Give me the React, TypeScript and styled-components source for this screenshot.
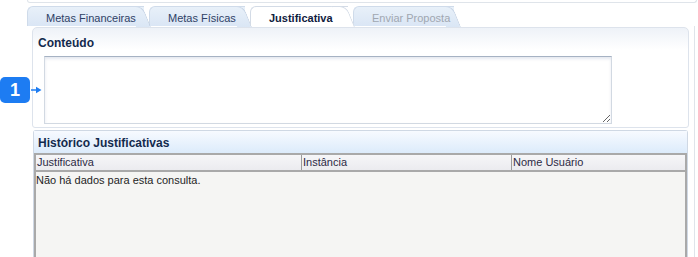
import styled, { createGlobalStyle } from 'styled-components'

const Global = createGlobalStyle`
  html, body { margin: 0; padding: 0; background: #fff; }
  body { font-family: "Liberation Sans", Arial, sans-serif; }
`

const Page = styled.div`
  position: relative;
  width: 698px;
  height: 257px;
  overflow: hidden;
  background: #fff;
`

const Frame = styled.div`
  margin-left: 27px;
  width: 670px;
`

const TopStrip = styled.div`
  height: 2px;
  border: 1px solid #dfe4ea;
  border-top: none;
  border-radius: 0 0 4px 4px;
`

const TabBar = styled.div`
  display: flex;
  height: 20px;
  margin-top: 3px;
`

const Tab = styled.div<{ $active?: boolean; $disabled?: boolean; $z: number; $w: number }>`
  position: relative;
  z-index: ${({ $z }) => $z};
  width: ${({ $w }) => $w}px;
  height: 20px;
  box-sizing: border-box;
  padding: 4px 0 0 18px;
  margin-right: 5px;
  font-size: 11px;
  line-height: 14px;
  font-weight: ${({ $active }) => ($active ? 700 : 400)};
  color: ${({ $active, $disabled }) => ($active ? '#0f2040' : $disabled ? '#a0a7b1' : '#2e4166')};
  background: ${({ $active }) => ($active ? '#fff' : 'linear-gradient(#e8f0f9, #dae6f5)')};
  border-top: 1px solid ${({ $active }) => ($active ? '#d3dbe6' : '#cfdbea')};
  border-left: 1px solid ${({ $active }) => ($active ? '#d3dbe6' : '#cfdbea')};
  border-top-left-radius: 6px;
  white-space: nowrap;

  &::after {
    content: '';
    position: absolute;
    top: -1px;
    right: -7px;
    width: 14px;
    height: 20px;
    background: inherit;
    border-top: 1px solid ${({ $active }) => ($active ? '#d3dbe6' : '#cfdbea')};
    border-right: 1px solid ${({ $active }) => ($active ? '#d3dbe6' : '#c3d1e3')};
    border-top-right-radius: 7px;
    transform: skewX(22deg);
    transform-origin: bottom left;
    z-index: -1;
  }
`

const Body = styled.div`
  margin-right: 2px;
  padding: 1px 5px 0 5px;
  border-right: 1px solid #dfe4ea;
  height: 240px;
  box-sizing: border-box;
  display: flex;
  flex-direction: column;
`

const Panel = styled.div`
  border: 1px solid #dde3ec;
  border-radius: 5px 5px 3px 3px;
  height: 101px;
  box-sizing: border-box;
  background: linear-gradient(#eef2f8, #fff 22px);
`

const PanelTitle = styled.div`
  padding: 8px 0 0 5px;
  height: 28px;
  box-sizing: border-box;
  font-size: 12px;
  line-height: 14px;
  font-weight: 700;
  color: #132a4d;
`

const TextBox = styled.textarea`
  display: block;
  margin: 0 0 0 11px;
  width: 568px;
  height: 68px;
  box-sizing: border-box;
  border: 1px solid #d2d9e2;
  border-top-color: #a6b2c3;
  box-shadow: inset 0 2px 3px rgba(150, 165, 190, 0.25);
  background: #fff;
  resize: both;
  outline: none;
  font-family: inherit;
`

const History = styled.div`
  margin: 2px 1px 0 1px;
  flex: 1;
  display: flex;
  flex-direction: column;
  border: 1px solid #cfd8e4;
  border-bottom: none;
  border-radius: 3px 3px 0 0;
`

const HistoryTitle = styled.div`
  height: 22px;
  padding: 5px 0 0 4px;
  box-sizing: border-box;
  font-size: 12px;
  line-height: 14px;
  font-weight: 700;
  color: #132a4d;
  background: linear-gradient(#f7faff, #dcebfb);
`

const Grid = styled.div`
  flex: 1;
  display: flex;
  flex-direction: column;
  border-left: 2px solid #a9a9a9;
  border-right: 2px solid #a9a9a9;
  background: #f5f5f3;
`

const HeadRow = styled.div`
  display: grid;
  grid-template-columns: 265px 210px 1fr;
  height: 19px;
  box-sizing: border-box;
  border-top: 2px solid #a9a9a9;
  border-bottom: 2px solid #a9a9a9;
  background: linear-gradient(#f6f6f8, #ebebef);
`

const HeadCell = styled.div<{ $first?: boolean }>`
  padding-left: 1px;
  font-size: 11px;
  line-height: 15px;
  color: #2c2a44;
  border-left: ${({ $first }) => ($first ? 'none' : '1px solid #9c9c9c')};
  white-space: nowrap;
`

const Empty = styled.div`
  padding: 1px 0 0 0;
  font-size: 11px;
  line-height: 14px;
  color: #1f1f1f;
`

const Marker = styled.div`
  position: absolute;
  left: 0;
  top: 77px;
  display: flex;
  align-items: center;
`

const Badge = styled.div`
  width: 30px;
  height: 26px;
  border-radius: 5px;
  background: #1d7cf2;
  color: #fff;
  font-size: 18px;
  font-weight: 700;
  display: flex;
  align-items: center;
  justify-content: center;
`

export default function App() {
  return (
    <Page>
      <Global />
      <Frame>
        <TopStrip />
        <TabBar>
          <Tab $z={4} $w={117}>Metas Financeiras</Tab>
          <Tab $z={3} $w={96}>Metas Físicas</Tab>
          <Tab $z={5} $w={98} $active>Justificativa</Tab>
          <Tab $z={1} $w={101} $disabled>Enviar Proposta</Tab>
        </TabBar>
        <Body>
          <Panel>
            <PanelTitle>Conteúdo</PanelTitle>
            <TextBox />
          </Panel>
          <History>
            <HistoryTitle>Histórico Justificativas</HistoryTitle>
            <Grid>
              <HeadRow>
                <HeadCell $first>Justificativa</HeadCell>
                <HeadCell>Instância</HeadCell>
                <HeadCell>Nome Usuário</HeadCell>
              </HeadRow>
              <Empty>Não há dados para esta consulta.</Empty>
            </Grid>
          </History>
        </Body>
      </Frame>
      <Marker>
        <Badge>1</Badge>
        <svg width="12" height="8" viewBox="0 0 12 8">
          <path d="M1 4H8" stroke="#1d7cf2" strokeWidth="1.5" />
          <path d="M6 0.8L11.5 4L6 7.2Z" fill="#1d7cf2" />
        </svg>
      </Marker>
    </Page>
  )
}
